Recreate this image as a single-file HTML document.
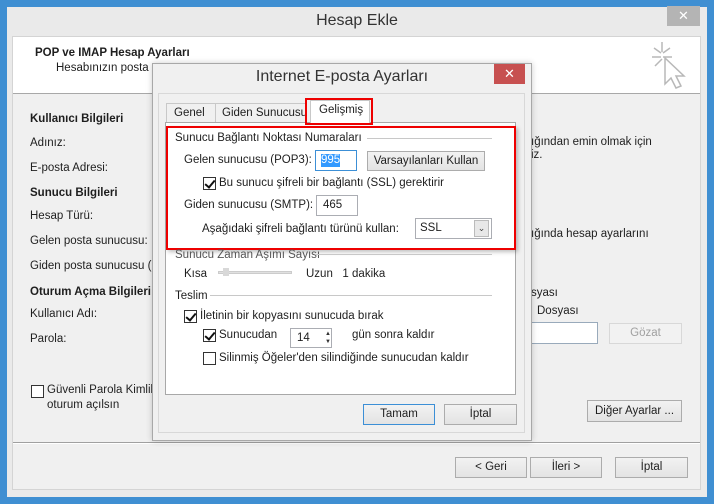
<!DOCTYPE html>
<html><head><meta charset="utf-8"><style>
*{margin:0;padding:0;box-sizing:border-box}
body{width:714px;height:504px;overflow:hidden;background:#3f8fd2;font-family:"Liberation Sans","DejaVu Sans",sans-serif;font-size:11.5px;color:#1e1e1e;position:relative}
.a{position:absolute;white-space:nowrap}
.btn{position:absolute;background:linear-gradient(#f2f2f2,#e3e3e3);border:1px solid #acacac;text-align:center;font-size:11.5px}
.cb{position:absolute;width:13px;height:13px;border:1px solid #333;background:#fff}
.cb.c::after{content:"";position:absolute;left:3px;top:0px;width:4px;height:8px;border:solid #111;border-width:0 2px 2px 0;transform:rotate(40deg)}
.inp{position:absolute;background:#fff;border:1px solid #abadb3}
.grp{position:absolute;height:1px;background:#c8c8c8}
</style></head><body>
<!-- outer window -->
<div class="a" style="left:7px;top:7px;width:700px;height:490px;background:#eaeaea"></div>
<div class="a" style="left:0;top:12px;width:714px;text-align:center;font-size:16px;color:#333">Hesap Ekle</div>
<div class="a" style="left:667px;top:6px;width:33px;height:20px;background:#b4b4b4;color:#fff;text-align:center;font-size:13px;line-height:20px">✕</div>
<div class="a" style="left:12px;top:36px;width:689px;height:454px;background:#f0f0f0;border:1px solid #d4d4d4"></div>
<div class="a" style="left:13px;top:37px;width:687px;height:57px;background:#fff;border-bottom:1px solid #a8a8a8"></div>
<div class="a" style="left:35px;top:47px;font-weight:bold">POP ve IMAP Hesap Ayarları</div>
<div class="a" style="left:56px;top:62px">Hesabınızın posta sunucusu</div>
<svg class="a" style="left:650px;top:40px" width="40" height="52" viewBox="0 0 40 52"><g stroke="#b8b8b8" stroke-width="1.5" fill="none"><path d="M12 2v10M4 8l7 5M2 17h9M20 8l-7 5M22 17h-9M5 26l7-7"/><path d="M15 18v26l6-6 5 10 5-2-5-10h8z" fill="#fff"/></g></svg>

<div class="a" style="left:30px;top:113px;font-weight:bold">Kullanıcı Bilgileri</div>
<div class="a" style="left:30px;top:137px">Adınız:</div>
<div class="a" style="left:30px;top:162px">E-posta Adresi:</div>
<div class="a" style="left:30px;top:187px;font-weight:bold">Sunucu Bilgileri</div>
<div class="a" style="left:30px;top:210px">Hesap Türü:</div>
<div class="a" style="left:30px;top:235px">Gelen posta sunucusu:</div>
<div class="a" style="left:30px;top:260px">Giden posta sunucusu (</div>
<div class="a" style="left:30px;top:286px;font-weight:bold">Oturum Açma Bilgileri</div>
<div class="a" style="left:30px;top:308px">Kullanıcı Adı:</div>
<div class="a" style="left:30px;top:333px">Parola:</div>
<div class="cb" style="left:31px;top:385px"></div>
<div class="a" style="left:47px;top:383px;line-height:15px">Güvenli Parola Kimlik<br>oturum açılsın</div>

<div class="a" style="left:531px;top:136px;line-height:13px">ığından emin olmak için<br>iz.</div>
<div class="a" style="left:531px;top:228px">ığında hesap ayarlarını</div>
<div class="a" style="left:531px;top:287px">syası</div>
<div class="a" style="left:537px;top:305px">Dosyası</div>
<div class="inp" style="left:520px;top:322px;width:78px;height:22px;border-color:#9ab"></div>
<div class="btn" style="left:609px;top:323px;width:73px;height:21px;line-height:19px;color:#a0a0a0;background:#f2f2f2;border-color:#d8d8d8">Gözat</div>
<div class="btn" style="left:587px;top:400px;width:95px;height:22px;line-height:20px">Diğer Ayarlar ...</div>

<div class="a" style="left:13px;top:442px;width:687px;height:2px;border-top:1px solid #a0a0a0;border-bottom:1px solid #fff"></div>
<div class="btn" style="left:455px;top:457px;width:72px;height:21px;line-height:19px">&lt; Geri</div>
<div class="btn" style="left:530px;top:457px;width:72px;height:21px;line-height:19px">İleri &gt;</div>
<div class="btn" style="left:615px;top:457px;width:73px;height:21px;line-height:19px">İptal</div>

<!-- inner dialog -->
<div class="a" style="left:152px;top:63px;width:380px;height:378px;background:#f0f0f0;border:1px solid #a8a8a8;box-shadow:0 0 6px rgba(0,0,0,.2)"></div>
<div class="a" style="left:152px;top:68px;width:380px;text-align:center;font-size:16px;color:#333">Internet E-posta Ayarları</div>
<div class="a" style="left:494px;top:64px;width:31px;height:20px;background:#c75050;color:#fff;text-align:center;font-size:13px;line-height:20px">✕</div>
<div class="a" style="left:158px;top:93px;width:367px;height:340px;border:1px solid #d8d8d8"></div>
<!-- tabs -->
<div class="a" style="left:166px;top:103px;width:50px;height:20px;border:1px solid #c8c8c8;border-bottom:none;background:#f0f0f0;padding:3px 0 0 7px">Genel</div>
<div class="a" style="left:215px;top:103px;width:92px;height:20px;border:1px solid #c8c8c8;border-bottom:none;background:#f0f0f0;padding:3px 0 0 6px;overflow:hidden">Giden Sunucusu</div>
<div class="a" style="left:165px;top:122px;width:351px;height:273px;background:#fff;border:1px solid #a8a8a8"></div>
<div class="a" style="left:310px;top:100px;width:60px;height:23px;background:#fff;border:1px solid #c8c8c8;border-bottom:none;padding:3px 0 0 8px">Gelişmiş</div>
<div class="a" style="left:305px;top:98px;width:68px;height:27px;border:2px solid #e00"></div>

<div class="a" style="left:175px;top:132px">Sunucu Bağlantı Noktası Numaraları</div>
<div class="grp" style="left:367px;top:138px;width:125px"></div>
<div class="a" style="left:184px;top:154px">Gelen sunucusu (POP3):</div>
<div class="inp" style="left:315px;top:150px;width:42px;height:21px;border-color:#3c8fd6"></div>
<div class="a" style="left:321px;top:154px;background:#3399ff;color:#fff;line-height:13px">995</div>
<div class="btn" style="left:367px;top:151px;width:118px;height:20px;line-height:18px">Varsayılanları Kullan</div>
<div class="cb c" style="left:203px;top:177px"></div>
<div class="a" style="left:219px;top:177px">Bu sunucu şifreli bir bağlantı (SSL) gerektirir</div>
<div class="a" style="left:184px;top:199px">Giden sunucusu (SMTP):</div>
<div class="inp" style="left:316px;top:195px;width:42px;height:21px"></div>
<div class="a" style="left:323px;top:199px">465</div>
<div class="a" style="left:202px;top:223px">Aşağıdaki şifreli bağlantı türünü kullan:</div>
<div class="inp" style="left:415px;top:218px;width:77px;height:21px"></div>
<div class="a" style="left:420px;top:222px">SSL</div>
<div class="a" style="left:474px;top:220px;width:15px;height:17px;background:#e8e8e8;border:1px solid #bbb;text-align:center;font-size:9px;line-height:15px;color:#444">⌄</div>
<div class="a" style="left:166px;top:126px;width:350px;height:124px;border:2px solid #e00;box-shadow:2px 2px 4px rgba(0,0,0,.25)"></div>

<div class="a" style="left:175px;top:249px;color:#555">Sunucu Zaman Aşımı Sayısı</div>
<div class="grp" style="left:315px;top:254px;width:177px"></div>
<div class="a" style="left:184px;top:268px">Kısa</div>
<div class="a" style="left:218px;top:271px;width:74px;height:3px;background:#e0e0e0;border:1px solid #ccc"></div>
<div class="a" style="left:223px;top:268px;width:6px;height:8px;background:#d8d8d8"></div>
<div class="a" style="left:306px;top:268px">Uzun&nbsp;&nbsp; 1 dakika</div>
<div class="a" style="left:175px;top:290px">Teslim</div>
<div class="grp" style="left:210px;top:295px;width:282px"></div>
<div class="cb c" style="left:184px;top:310px"></div>
<div class="a" style="left:200px;top:310px">İletinin bir kopyasını sunucuda bırak</div>
<div class="cb c" style="left:203px;top:329px"></div>
<div class="a" style="left:219px;top:329px">Sunucudan</div>
<div class="inp" style="left:290px;top:328px;width:42px;height:20px"></div>
<div class="a" style="left:297px;top:332px">14</div>
<div class="a" style="left:325px;top:330px;width:6px;height:16px;font-size:6px;line-height:8px;color:#333">▲<br>▼</div>
<div class="a" style="left:352px;top:329px">gün sonra kaldır</div>
<div class="cb" style="left:203px;top:352px"></div>
<div class="a" style="left:219px;top:352px">Silinmiş Öğeler'den silindiğinde sunucudan kaldır</div>

<div class="btn" style="left:363px;top:404px;width:72px;height:21px;line-height:19px;border-color:#3c8fd6">Tamam</div>
<div class="btn" style="left:444px;top:404px;width:73px;height:21px;line-height:19px">İptal</div>
</body></html>
